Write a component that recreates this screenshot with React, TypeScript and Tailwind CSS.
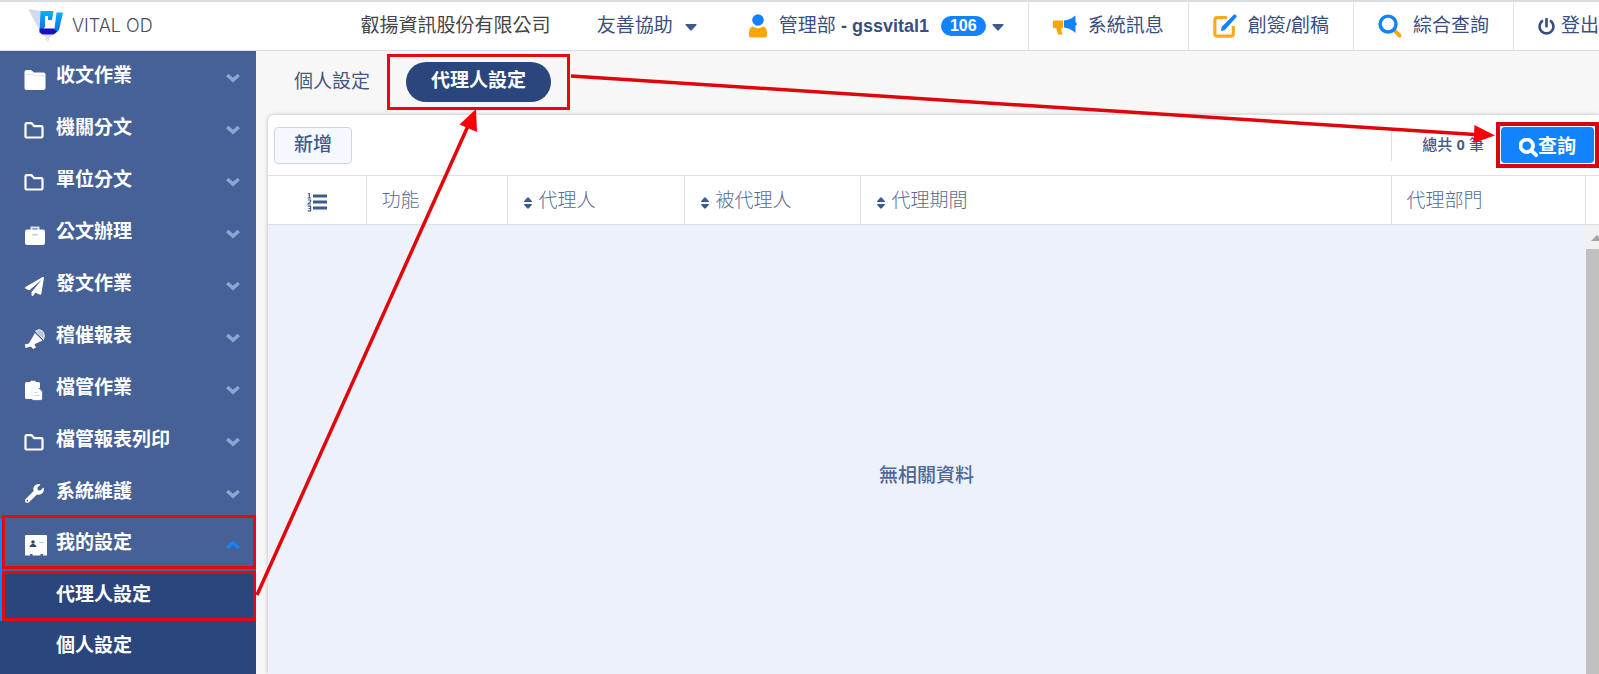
import { FaPaperPlane, FaPowerOff, FaSearch, FaWrench } from "react-icons/fa";

type IconName =
  | "folder"
  | "folderOutline"
  | "briefcase"
  | "plane"
  | "lamp"
  | "paste"
  | "wrench"
  | "card";

const MENU: { label: string; icon: IconName }[] = [
  { label: "收文作業", icon: "folder" },
  { label: "機關分文", icon: "folderOutline" },
  { label: "單位分文", icon: "folderOutline" },
  { label: "公文辦理", icon: "briefcase" },
  { label: "發文作業", icon: "plane" },
  { label: "稽催報表", icon: "lamp" },
  { label: "檔管作業", icon: "paste" },
  { label: "檔管報表列印", icon: "folderOutline" },
  { label: "系統維護", icon: "wrench" },
];

const COLUMNS = [
  { label: "功能", sortable: false },
  { label: "代理人", sortable: true },
  { label: "被代理人", sortable: true },
  { label: "代理期間", sortable: true },
  { label: "代理部門", sortable: false },
];

function MenuIcon({ name }: { name: IconName }) {
  return (
    <svg aria-hidden viewBox="0 0 24 24" className="mt-2 h-6 w-6 shrink-0" fill="#fff">
      {name === "folder" && (
        <>
          <path d="M.5 4q0-2 2-2h4.500l3 2.500h9.500q2 0 2 2V20q0 2-2 2h-17q-2 0-2-2z" />
          <path d="M3 6.500h6l1.500 1.200H20" fill="none" stroke="#c9d3e6" strokeWidth=".7" />
        </>
      )}
      {name === "folderOutline" && (
        <path
          d="M1.500 4.500q0-1.300 1.300-1.300h4.700l2.700 3h7q1.300 0 1.300 1.300v8.700q0 1.300-1.300 1.300H2.800q-1.300 0-1.300-1.300z"
          fill="none"
          stroke="#fff"
          strokeWidth="2.200"
        />
      )}
      {name === "briefcase" && (
        <>
          <path d="M7.500 7V3.500h7V7" fill="none" stroke="#dbe3f1" strokeWidth="2" />
          <rect x="1" y="5.500" width="20" height="15.500" rx="2.200" />
          <rect x="8.500" y="10" width="5" height="1.500" fill="#b9c6de" />
        </>
      )}
      {name === "plane" && <FaPaperPlane x="1" y="1" width="21" height="21" color="#fff" />}
      {name === "lamp" && (
        <>
          <path d="M11 5l7.500 7.500-6.500 3-1.500 1 1.500 3-3 1.500-2-2.500L1.500 20 .8 16.500l4-1z" />
          <path d="M11.500 3q4-3 7 0t1 8.500z" fill="#b9c6de" stroke="#fff" strokeWidth=".8" />
        </>
      )}
      {name === "paste" && (
        <>
          <path d="M1 3.500q0-1.500 1.500-1.500H6l1-1.200h4L12 2h2.500Q16 2 16 3.500V8H9v11H2.500Q1 19 1 17.500z" />
          <path d="M8 8h6.500l3.500 3.500v7q0 1.500-1.500 1.500h-7Q8 20 8 18.500z" stroke="#c9d3e6" strokeWidth=".4" />
          <path d="M10.500 12.500h3M10.500 15.500h5" stroke="#b9c6de" strokeWidth=".8" />
        </>
      )}
      {name === "wrench" && <FaWrench x="1" y="0" width="20" height="20" color="#fff" />}
      {name === "card" && (
        <>
          <path d="M1 1q0-1 1-1h20q1 0 1 1v19.500h-4V19h-2.500v1.500h-8V19H6v1.500H1z" />
          <circle cx="9" cy="7" r="1.800" fill="#33466f" />
          <path d="M5.500 12q0-2.200 2.700-3h1.600q2.700.8 2.700 3z" fill="#33466f" />
          <path d="M15 7.500h5" stroke="#b9c6de" strokeWidth="1" />
        </>
      )}
    </svg>
  );
}

function Chevron({ up }: { up?: boolean }) {
  return (
    <svg
      aria-hidden
      viewBox="0 0 14 10"
      className="mt-1 ml-auto h-[10px] w-[14px]"
      fill="none"
      stroke={up ? "#1a80f5" : "#89a6d8"}
      strokeWidth="3.600"
    >
      <path d={up ? "M1.200 8L7 2.800 12.800 8" : "M1.200 2L7 7.200 12.800 2"} />
    </svg>
  );
}

function Caret() {
  return (
    <svg aria-hidden viewBox="0 0 12 7" className="mt-0.5 h-[7px] w-3" fill="#3b5a94">
      <path d="M1 0h10q1 .3.500 1L7 6q-1 1-2 0L.5 1Q0 .3 1 0z" />
    </svg>
  );
}

function SortIcon() {
  return (
    <svg aria-hidden viewBox="0 0 10 14" className="mt-1 h-3 w-[10px]" fill="#3b5a94">
      <path d="M.8 5.800Q0 5.500.6 4.600L4 .8q1-1 2 0l3.400 3.800q.6.900-.2 1.200zM.8 8.200Q0 8.500.6 9.400L4 13.200q1 1 2 0l3.400-3.800q.6-.9-.2-1.200z" />
    </svg>
  );
}

function NumberedListIcon() {
  return (
    <svg
      aria-hidden
      viewBox="0 0 20 20"
      className="mx-auto mt-1 h-5 w-5"
      fill="none"
      stroke="#3b5a94"
    >
      <path d="M6 4h14M6 10h14M6 16h14" strokeWidth="3" />
      <path
        d="M1 1.500h1.300V6M.6 6h3.400M.8 8h2.800v1.600L1 12h3M.8 14.200h2.800v4.600H.8M1.500 16.500h2"
        strokeWidth="1.200"
      />
    </svg>
  );
}

function Logo() {
  return (
    <svg aria-hidden viewBox="0 0 36 34" className="h-[34px] w-9">
      <defs>
        <linearGradient id="logo-bright" x1="0" y1="0" x2="0" y2="1">
          <stop offset="0" stopColor="#06b2f6" />
          <stop offset="1" stopColor="#1463ee" />
        </linearGradient>
      </defs>
      <path d="M0 0l13 2-1.500 19z" fill="#d3d9ee" />
      <path d="M11.500 20l14 2-5.500 11z" fill="#dde2f8" />
      <path d="M12.500 2h13l-1.500 9h-4V7h-3v11l-5.500 6z" fill="url(#logo-bright)" />
      <path d="M28.500 3.500H35L31 21l-4.500 4-4-2.500 4-3z" fill="url(#logo-bright)" />
      <path d="M11.500 19.500h14l3.500 3-3.500 3H15q-3.500-1-3.500-4z" fill="#1414b8" />
    </svg>
  );
}

function UserIcon() {
  return (
    <svg aria-hidden viewBox="0 0 18 24" className="h-6 w-[18px]">
      <circle cx="9" cy="6" r="5.800" fill="#1183ff" />
      <path
        d="M3.500 12.500Q9 16 14.500 12.500 18 14 18 18.500V21q0 2.500-2.500 2.500h-13Q0 23.500 0 21v-2.500Q0 14 3.500 12.500z"
        fill="#fba507"
      />
    </svg>
  );
}

function MegaphoneIcon() {
  return (
    <svg aria-hidden viewBox="0 0 24 22" className="h-[22px] w-6">
      <path d="M1 5.500h9v7.500H8.500q-.5 2 1 6.500H5.200q-1.700-3-1.700-6.500H1q-1 0-1-.8V6.500q0-1 1-1z" fill="#fba507" />
      <path d="M11 5.500Q17 5 22.500.5v7q1.500.3 1.500 1.500t-1.500 1.500v7.500Q17 13 11 12.500z" fill="#1183ff" />
    </svg>
  );
}

function EditIcon() {
  return (
    <svg aria-hidden viewBox="0 0 26 26" className="h-6 w-6" fill="none">
      <path
        d="M15 4H5Q2 4 2 7v14q0 3 3 3h14q3 0 3-3v-8"
        stroke="#fba81c"
        strokeWidth="3.400"
      />
      <path d="M8.500 18.500l1-4.700L22.500.8q1-.8 2 0l.8.8q.8 1 0 2L12.500 17.500z" fill="#1183ff" />
    </svg>
  );
}

function SearchIcon() {
  return (
    <svg aria-hidden viewBox="0 0 25 25" className="h-6 w-6" fill="none">
      <path d="M16.500 16.500l6 6" stroke="#fba507" strokeWidth="4" strokeLinecap="round" />
      <circle cx="10.500" cy="10.500" r="8.300" stroke="#1183ff" strokeWidth="3.600" />
    </svg>
  );
}

function Header() {
  const item = "flex h-full items-center gap-[11px] border-l border-[#dde2ea] px-6";
  return (
    <header className="flex h-[51px] items-center border-t-2 border-b border-t-[#d9dde0] border-b-[#d8dde5] bg-white whitespace-nowrap text-[#3a4f80]">
      <a href="#" className="flex items-center gap-2 pl-7 text-[#4a4f5c]">
        <Logo />
        <span className="font-[Inter,sans-serif] text-[18px] font-light">VITAL OD</span>
      </a>
      <div className="ml-auto flex h-full shrink-0 items-center">
        <span className="mr-[46px] text-[#444]">叡揚資訊股份有限公司</span>
        <button className="mr-[52px] flex items-center gap-3">
          友善協助
          <Caret />
        </button>
        <button className="mr-6 flex items-center gap-3">
          <UserIcon />
          <span>
            管理部 <b className="text-[18px]">- gssvital1</b>
          </span>
          <span className="flex items-center gap-1.5">
            <span className="rounded-full bg-[#1183ff] px-[9px] text-[16px] leading-5 font-bold text-white">
              106
            </span>
            <Caret />
          </span>
        </button>
        <a href="#" className={item}>
          <MegaphoneIcon />
          系統訊息
        </a>
        <a href="#" className={item}>
          <EditIcon />
          創簽/創稿
        </a>
        <a href="#" className={item}>
          <SearchIcon />
          綜合查詢
        </a>
        <a href="#" className="flex h-full items-center gap-1.5 border-l border-[#dde2ea] pl-6">
          <FaPowerOff aria-hidden className="h-[17px] w-[17px]" />
          登出
        </a>
      </div>
    </header>
  );
}

function Sidebar() {
  return (
    <nav className="w-64 shrink-0 bg-[#456196] font-bold text-white">
      {MENU.map((m) => (
        <button key={m.label} className="flex h-[52px] w-full items-center gap-2 pr-4 pb-0.5 pl-6">
          <MenuIcon name={m.icon} />
          {m.label}
          <Chevron />
        </button>
      ))}
      <div className="relative">
        <button className="flex h-[52px] w-full items-center gap-2 border-l-2 border-[#1183ff] pr-4 pb-1 pl-[22px]">
          <MenuIcon name="card" />
          我的設定
          <Chevron up />
        </button>
        <span className="absolute inset-x-0 -top-1 bottom-0.5 ml-0.5 border-[3px] border-[#e30a10]" />
      </div>
      <div className="bg-[#2a467c]">
        <a
          href="#"
          className="relative flex h-[50px] items-center border-l-2 border-[#1183ff] pb-0.5 pl-[54px]"
        >
          代理人設定
          <span className="absolute inset-0 border-[3px] border-[#e30a10]" />
        </a>
        <a href="#" className="flex h-[53px] items-center pb-1 pl-14">
          個人設定
        </a>
      </div>
    </nav>
  );
}

function AgentTable() {
  return (
    <table className="w-full table-fixed text-left">
      <colgroup>
        <col className="w-[98px]" />
        <col className="w-[141px]" />
        <col className="w-[177px]" />
        <col className="w-[176px]" />
        <col />
        <col className="w-[194px]" />
        <col className="w-[14px]" />
      </colgroup>
      <thead>
        <tr className="h-[49px] border-y border-[#dde2ea]">
          <th aria-label="序號" className="border-r border-[#dde2ea]">
            <NumberedListIcon />
          </th>
          {COLUMNS.map((c) => (
            <th key={c.label} className="border-r border-[#dde2ea] pt-0.5 pl-[15px] font-light text-[#566a92]">
              <span className="flex items-center gap-1.5">
                {c.sortable && <SortIcon />}
                {c.label}
              </span>
            </th>
          ))}
          <th aria-hidden />
        </tr>
      </thead>
    </table>
  );
}

// Guide arrows: menu item -> tab -> search button
function GuideArrows() {
  return (
    <svg
      aria-hidden
      className="pointer-events-none absolute top-0 left-0 h-[674px] w-[1599px]"
      fill="#fb0007"
      stroke="#e0060b"
    >
      <path d="M257 595L468 126" strokeWidth="3.500" />
      <path d="M476 109l1 23-17.500-7.500z" stroke="none" />
      <path d="M571 76l904 58.500" strokeWidth="3.500" />
      <path d="M1495 135.500l-21.500 7.500 1-18z" stroke="none" />
    </svg>
  );
}

export default function App() {
  return (
    <div className="relative flex min-h-screen flex-col overflow-hidden bg-[#f7f7f7] font-['Liberation_Sans','Noto_Sans_CJK_TC',sans-serif] text-[19px] leading-7">
      <Header />
      <div className="flex flex-1">
        <Sidebar />
        <main className="flex min-w-0 flex-1 flex-col pl-3">
          <div className="flex h-16 items-center pb-0.5 pl-[26px]">
            <a href="#" className="text-[#46587f]">
              個人設定
            </a>
            <div className="ml-[17px] border-[3px] border-[#e30a10] px-4 py-[5px]">
              <button className="h-10 rounded-full bg-[#2a467c] px-[25px] pb-0.5 font-bold text-white">
                代理人設定
              </button>
            </div>
          </div>
          <section className="flex flex-1 flex-col rounded-tl-md bg-white shadow-[0_0_4px_rgba(0,0,0,0.25)]">
            <div className="flex h-[60px] items-center pl-1.5">
              <button className="h-[37px] rounded border border-[#ccd5e8] bg-[#f5f8fe] px-[19px] font-medium text-[#3f5a90]">
                新增
              </button>
              <div className="ml-auto flex items-center">
                <span className="mr-3 border-l border-[#dde2ea] py-0.5 pl-[30px] text-[15px] font-medium text-[#46587f]">
                  總共 <b>0</b> 筆
                </span>
                <div className="border-4 border-[#d8060f] p-px">
                  <button className="flex h-9 items-center rounded bg-[#1183ff] px-[18px] pt-1 font-bold text-white">
                    <FaSearch aria-hidden className="h-[19px] w-[19px]" stroke="#fff" strokeWidth="24" />
                    查詢
                  </button>
                </div>
              </div>
            </div>
            <AgentTable />
            <div className="flex flex-1 bg-[#edf1fc]">
              <p className="flex-1 pt-[237px] text-center font-medium text-[#4d6799]">無相關資料</p>
              <div className="flex w-[14px] flex-col bg-[#f1f1f1] pl-px">
                <svg aria-hidden viewBox="0 0 13 24" className="h-6 w-[13px]" fill="#a3a3a3">
                  <path d="M5 16l6-6 6 6z" />
                </svg>
                <div className="flex-1 bg-[#c1c1c1]" />
              </div>
            </div>
          </section>
        </main>
      </div>
      <GuideArrows />
    </div>
  );
}
